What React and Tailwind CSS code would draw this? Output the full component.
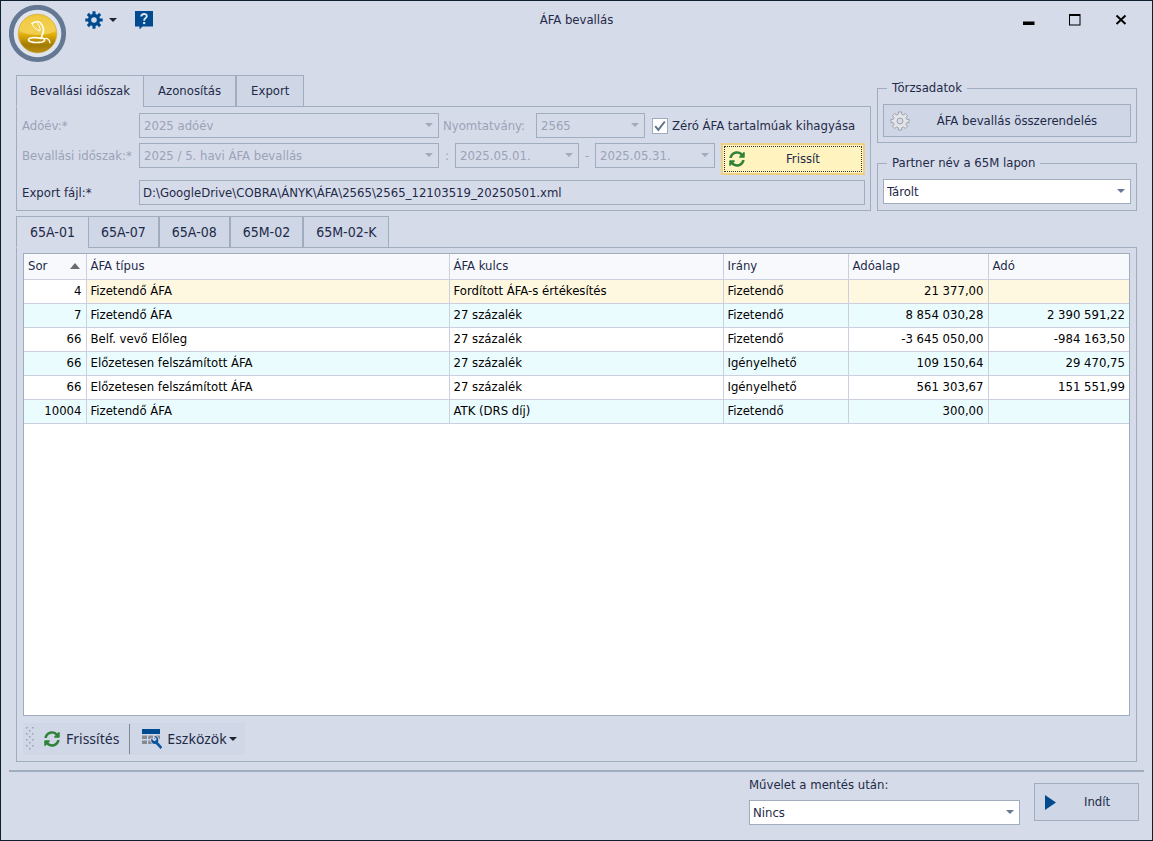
import React from "react";
import { FaSyncAlt } from "react-icons/fa";

const upperTabs = ["Bevallási időszak", "Azonosítás", "Export"];
const lowerTabs = ["65A-01", "65A-07", "65A-08", "65M-02", "65M-02-K"];

const rows = [
  ["4", "Fizetendő ÁFA", "Fordított ÁFA-s értékesítés", "Fizetendő", "21 377,00", ""],
  ["7", "Fizetendő ÁFA", "27 százalék", "Fizetendő", "8 854 030,28", "2 390 591,22"],
  ["66", "Belf. vevő Előleg", "27 százalék", "Fizetendő", "-3 645 050,00", "-984 163,50"],
  ["66", "Előzetesen felszámított ÁFA", "27 százalék", "Igényelhető", "109 150,64", "29 470,75"],
  ["66", "Előzetesen felszámított ÁFA", "27 százalék", "Igényelhető", "561 303,67", "151 551,99"],
  ["10004", "Fizetendő ÁFA", "ATK (DRS díj)", "Fizetendő", "300,00", ""],
];

const headers = ["Sor", "ÁFA típus", "ÁFA kulcs", "Irány", "Adóalap", "Adó"];

function gearPath(outer, inner) {
  const points = [];
  for (let i = 0; i < 8; i++) {
    const mid = (i * Math.PI) / 4 - Math.PI / 2;
    [[-0.26, inner], [-0.17, outer], [0.17, outer], [0.26, inner]].forEach(([d, r]) => {
      points.push(`${(10 + r * Math.cos(mid + d)).toFixed(2)} ${(10 + r * Math.sin(mid + d)).toFixed(2)}`);
    });
  }
  return `M${points.join("L")}Z`;
}

function Caret({ className = "" }) {
  return (
    <svg viewBox="0 0 8 4" className={`h-1 w-2 ${className}`} aria-hidden="true">
      <path d="M0 0H8L4 4Z" fill="currentColor" />
    </svg>
  );
}

function Logo() {
  return (
    <svg viewBox="0 0 58 58" className="size-[58px] shrink-0" role="img" aria-label="Cobra">
      <defs>
        <linearGradient id="gold" x1="0" y1="0" x2="0" y2="1">
          <stop offset="0" stopColor="#eec539" />
          <stop offset="0.42" stopColor="#eec435" />
          <stop offset="0.55" stopColor="#dcaa06" />
          <stop offset="0.8" stopColor="#a47b04" />
          <stop offset="1" stopColor="#b98f10" />
        </linearGradient>
        <linearGradient id="shine" x1="0" y1="0" x2="0" y2="1">
          <stop offset="0" stopColor="#f2cb42" />
          <stop offset="1" stopColor="#f6d866" />
        </linearGradient>
      </defs>
      <circle cx="28.500" cy="28.500" r="26.200" fill="#dfe4ee" stroke="#647893" strokeWidth="4.800" />
      <circle cx="28.500" cy="28.500" r="21" fill="#e1e6f0" />
      <circle cx="28.500" cy="28.500" r="19.400" fill="url(#gold)" stroke="#c9a94a" strokeWidth="0.600" />
      <path d="M10.500 26C10.500 16 19 11 28.500 11S46.500 16 46.500 26C40 29 34 30 28.500 30S16 29 10.500 26Z" fill="url(#shine)" opacity="0.700" />
      <g fill="none" stroke="#fffdf2" strokeLinecap="round" strokeLinejoin="round">
        <path d="M23 18.500C26 16.500 30 16 31.500 18C34 21 35 24 34.300 27C33.700 29.500 32.500 30.500 32.500 32.500" strokeWidth="1.700" />
        <path d="M23 18.500C24 22 27 24.500 31 26C31.500 23.500 30.500 20.500 28.500 18.500" strokeWidth="1" />
        <path d="M32.500 32.500C36 33.500 37 36 33 37C28 38 19.500 37.500 19.500 34.800C19.500 32.500 27 31.800 32.500 33.500" strokeWidth="1.700" />
        <path d="M35.500 33.500C38.500 33 40.500 34.500 41 37.800" strokeWidth="1.200" />
      </g>
    </svg>
  );
}

function Combo({ id, label, value, disabled, className = "" }) {
  return (
    <span className={`relative flex h-[25px] ${className}`}>
      <select
        id={id}
        aria-label={label}
        disabled={disabled}
        defaultValue={value}
        className="w-full appearance-none truncate border border-[#a0adbf] bg-white pr-5 pl-[3px] text-[#1e2a48] disabled:bg-transparent disabled:pl-1 disabled:text-[#9aa3b7] disabled:opacity-100"
      >
        <option>{value}</option>
      </select>
      <Caret className={`pointer-events-none absolute top-[10px] right-1.5 ${disabled ? "text-[#a0abbd]" : "text-[#647893]"}`} />
    </span>
  );
}

function Tabs({ items, label, className = "" }) {
  return (
    <div role="tablist" aria-label={label} className={`relative -mb-px flex h-8 ${className}`}>
      {items.map((item, i) => (
        <button
          key={item}
          role="tab"
          aria-selected={i === 0}
          className={
            i === 0
              ? "border-y border-l border-[#a0adbf] border-b-[#d6dbe9] bg-[#d6dbe9] px-[13px]"
              : "border border-[#a0adbf] bg-[#cfd6e6] px-3"
          }
        >
          {item}
        </button>
      ))}
    </div>
  );
}

function TitleBar() {
  return (
    <header className="grid h-[74px] shrink-0 grid-cols-[1fr_auto_1fr] items-start">
      <div className="flex pt-1 pl-2">
        <Logo />
        <div className="ml-[18px] flex h-[30px] items-center">
          <button aria-label="Beállítások" className="flex items-center gap-1.5">
            <svg viewBox="0 0 20 20" className="size-[18px]" aria-hidden="true">
              <path fillRule="evenodd" fill="#004b8f" d={`${gearPath(9.8, 6.9)}M10 6.900a3.100 3.100 0 1 0 0 6.200a3.100 3.100 0 1 0 0-6.200Z`} />
            </svg>
            <Caret className="text-[#20242e]" />
          </button>
          <button aria-label="Súgó" className="ml-[18px]">
            <svg viewBox="0 0 18 18" className="size-[18px]" aria-hidden="true">
              <path d="M0 0H18V15.500H7.500L4.500 18.500V15.500H0Z" fill="#004b8f" />
              <path d="M6.200 5.500C6.400 2.300 11.900 2.300 11.800 5.200C11.700 7.200 9.100 7 9.100 9.700" fill="none" stroke="#dce5f2" strokeWidth="1.900" />
              <rect x="8.100" y="11" width="2.100" height="2.100" fill="#dce5f2" />
            </svg>
          </button>
        </div>
      </div>
      <h1 className="pt-[10px]">ÁFA bevallás</h1>
      <div className="flex justify-end gap-[22px] pt-[7px] pr-[19px] text-black">
        <button aria-label="Kis méret" className="flex size-6 items-center justify-center">
          <svg viewBox="0 0 12 12" className="size-3" aria-hidden="true"><path d="M0 7.500H11.500V11H0Z" fill="currentColor" /></svg>
        </button>
        <button aria-label="Teljes méret" className="flex size-6 items-center justify-center">
          <svg viewBox="0 0 12 12" className="size-3" aria-hidden="true"><path fillRule="evenodd" d="M0 0H11.500V11.500H0ZM1 2V10.500H10.500V2Z" fill="currentColor" /></svg>
        </button>
        <button aria-label="Bezárás" className="flex size-6 items-center justify-center">
          <svg viewBox="0 0 12 12" className="size-3" aria-hidden="true"><path d="M1.500 1.500L10.500 10M10.500 1.500L1.500 10" stroke="currentColor" strokeWidth="1.900" /></svg>
        </button>
      </div>
    </header>
  );
}

function PeriodPanel() {
  return (
    <section className="flex flex-1 flex-col">
      <Tabs items={upperTabs} label="Bevallás" className="*:not-first:px-3.5" />
      <div className="flex flex-1 border border-[#a0adbf] px-[5px] pt-1.5 pb-[5px]">
        <div className="grid flex-1 grid-cols-[117px_1fr] content-between">
          <label htmlFor="year" className="flex h-[25px] items-center text-[#9aa3b7]">Adóév:*</label>
          <div className="flex items-center">
            <Combo id="year" value="2025 adóév" disabled className="min-w-40 flex-1" />
            <label htmlFor="form" className="w-[97px] pl-1 text-[#9aa3b7]">Nyomtatvány:</label>
            <Combo id="form" value="2565" disabled className="w-[109px]" />
            <label className="ml-[7px] flex w-[213px] items-center gap-1 whitespace-nowrap">
              <input type="checkbox" defaultChecked className="peer sr-only" />
              <span className="flex size-4 shrink-0 items-center justify-center border border-[#a0adbf] bg-white *:invisible peer-checked:*:visible">
                <svg viewBox="0 0 12 12" className="size-3" aria-hidden="true">
                  <path d="M1.200 6.200L4.300 9.800L10.800 1.500" fill="none" stroke="#60738f" strokeWidth="2" />
                </svg>
              </span>
              Zéró ÁFA tartalmúak kihagyása
            </label>
          </div>
          <label htmlFor="period" className="flex h-[25px] items-center whitespace-nowrap text-[#9aa3b7]">Bevallási időszak:*</label>
          <div className="flex items-start text-[#9aa3b7]">
            <Combo id="period" value="2025 / 5. havi ÁFA bevallás" disabled className="min-w-40 flex-1" />
            <span className="w-4 pt-1 text-center">:</span>
            <Combo label="Időszak kezdete" value="2025.05.01." disabled className="w-[124px]" />
            <span className="w-4 pt-1 text-center">-</span>
            <Combo label="Időszak vége" value="2025.05.31." disabled className="w-[120px]" />
            <button className="ml-1.5 h-8 w-[144px] border-2 border-[#edd083] bg-[#fff3c0] p-px text-[#1e2a48]">
              <span className="flex h-full items-center border border-dotted border-[#333333] pl-1">
                <FaSyncAlt className="size-4 text-[#2f8238]" aria-hidden="true" />
                <span className="flex-1 text-center">Frissít</span>
              </span>
            </button>
          </div>
          <label htmlFor="file" className="flex h-[25px] items-center">Export fájl:*</label>
          <input
            id="file"
            readOnly
            defaultValue="D:\GoogleDrive\COBRA\ÁNYK\ÁFA\2565\2565_12103519_20250501.xml"
            className="h-[25px] border border-[#a0adbf] bg-transparent px-[3px]"
          />
        </div>
      </div>
    </section>
  );
}

function SidePanel() {
  return (
    <aside className="flex w-[260px] shrink-0 flex-col justify-between pt-1">
      <fieldset className="border border-[#a0adbf] px-[5px] pt-[7px] pb-[5px]">
        <legend className="ml-1 px-[5px] leading-[18px]">Törzsadatok</legend>
        <button className="flex h-[33px] w-full items-center border border-[#a0adbf] bg-[#cfd6e6] px-1.5">
          <svg viewBox="0 0 20 20" className="size-5" aria-hidden="true">
            <path d={gearPath(9.2, 6.9)} fill="#e3e5ea" stroke="#9fa2a8" strokeWidth="1" strokeLinejoin="round" />
            <circle cx="10" cy="10" r="3" fill="#d6dbe9" stroke="#9fa2a8" strokeWidth="1" />
          </svg>
          <span className="flex-1 text-center">ÁFA bevallás összerendelés</span>
        </button>
      </fieldset>
      <fieldset className="border border-[#a0adbf] px-[5px] pt-[7px] pb-1.5">
        <legend className="ml-1 px-[5px] leading-[18px]">Partner név a 65M lapon</legend>
        <Combo label="Partner név a 65M lapon" value="Tárolt" />
      </fieldset>
    </aside>
  );
}

function DataTable() {
  return (
    <div className="flex-1 border border-[#a0adbf] bg-white">
      <table className="w-full table-fixed border-collapse text-black">
        <colgroup>
          <col className="w-[62px]" />
          <col />
          <col className="w-[274px]" />
          <col className="w-[125px]" />
          <col className="w-[140px]" />
          <col className="w-[141px]" />
        </colgroup>
        <thead>
          <tr className="h-[25px] bg-[#f7f9fd] text-[#1e2a48]">
            {headers.map((h, i) => (
              <th key={h} className="border-r border-b border-[#cccfe0] px-1 py-0 text-left font-normal last:border-r-0">
                {i === 0 ? (
                  <span className="flex items-center justify-between pr-0.5">
                    {h}
                    <svg viewBox="0 0 10 6" className="h-1.5 w-2.5" aria-hidden="true"><path d="M0 6L5 0L10 6Z" fill="#6b6b6b" /></svg>
                  </span>
                ) : h}
              </th>
            ))}
          </tr>
        </thead>
        <tbody>
          {rows.map((row, r) => (
            <tr key={r} className={r === 0 ? "h-6 bg-[#fff8e0]" : r % 2 ? "h-6 bg-[#ebfcff]" : "h-6 bg-white"}>
              {row.map((cell, c) => (
                <td
                  key={c}
                  className={`border-r border-b border-[#cccfe0] px-1 py-0 last:border-r-0 ${c === 0 || c > 3 ? "text-right" : ""} ${r === 0 && c === 0 ? "bg-white" : ""}`}
                >
                  {cell}
                </td>
              ))}
            </tr>
          ))}
        </tbody>
      </table>
    </div>
  );
}

function Toolbar() {
  return (
    <div className="mt-[7px] flex h-8 items-center self-start bg-[#d0d7e6] pr-2 pl-[3px] font-['Noto_Sans',sans-serif] text-sm">
      <svg viewBox="0 0 8 24" className="h-6 w-2" aria-hidden="true">
        <defs>
          <pattern id="grip" width="6" height="6" patternUnits="userSpaceOnUse">
            <rect width="1.500" height="1.500" fill="#9aa3b2" />
            <rect x="3" y="3" width="1.500" height="1.500" fill="#9aa3b2" />
          </pattern>
        </defs>
        <rect width="8" height="24" fill="url(#grip)" />
      </svg>
      <button className="ml-2.5 flex items-center gap-1.5">
        <FaSyncAlt className="size-4 text-[#2f8238]" aria-hidden="true" />
        Frissítés
      </button>
      <span className="mr-3 ml-2.5 h-[30px] w-px bg-[#7f8794]" />
      <button className="flex items-center">
        <svg viewBox="0 0 20 20" className="mr-[5px] size-5" aria-hidden="true">
          <path d="M0 0H18V5H0Z" fill="#004b8f" />
          <path d="M0 6.500H5V10H0ZM6.200 6.500H11V10H6.200ZM12.200 6.500H18V10H12.200ZM0 11.500H5V15H0ZM6.200 11.500H11V15H6.200Z" fill="#858a93" />
          <path d="M12.200 7.200L14.600 9.600L14 11.500L12 12L9.400 9.600C8.300 13.200 11 15.800 13.800 14.900L18.500 19.900L20.300 18.100L16 13.200C17.200 9.800 15 6.500 12.200 7.200Z" fill="#10569c" stroke="#d0d7e6" strokeWidth="1.600" paintOrder="stroke" strokeLinejoin="round" />
        </svg>
        Eszközök
        <Caret className="ml-0.5 text-[#20242e]" />
      </button>
    </div>
  );
}

export default function App() {
  return (
    <main className="flex min-h-screen flex-col border border-[#0c2030] bg-[#d6dbe9] font-['DejaVu_Sans_Condensed','DejaVu_Sans',sans-serif] text-[13px] leading-[18px] text-[#1e2a48]">
      <TitleBar />
      <div className="flex flex-1 flex-col px-[15px]">
        <div className="flex h-[136px] gap-1.5">
          <PeriodPanel />
          <SidePanel />
        </div>
        <section className="mt-[5px] flex flex-1 flex-col">
          <Tabs items={lowerTabs} label="Lapok" className="text-sm" />
          <div className="flex flex-1 flex-col border border-[#a0adbf] px-1.5 pt-[5px] pb-1.5">
            <DataTable />
            <Toolbar />
          </div>
        </section>
      </div>
      <footer className="mx-2 mt-2 flex h-[70px] justify-end gap-3.5 border-t-2 border-[#a0adbf] pr-[5px]">
        <div className="w-[271px] pt-1">
          <label htmlFor="after" className="mb-1.5 block leading-[18px]">Művelet a mentés után:</label>
          <Combo id="after" value="Nincs" />
        </div>
        <button className="mt-[11px] flex h-[38px] w-[105px] items-center border border-[#a0adbf] bg-[#cfd6e6] pl-2.5">
          <svg viewBox="0 0 11 15" className="h-[15px] w-[11px]" aria-hidden="true"><path d="M0 0L11 7.500L0 15Z" fill="#004b8f" /></svg>
          <span className="flex-1 text-center">Indít</span>
        </button>
      </footer>
    </main>
  );
}
